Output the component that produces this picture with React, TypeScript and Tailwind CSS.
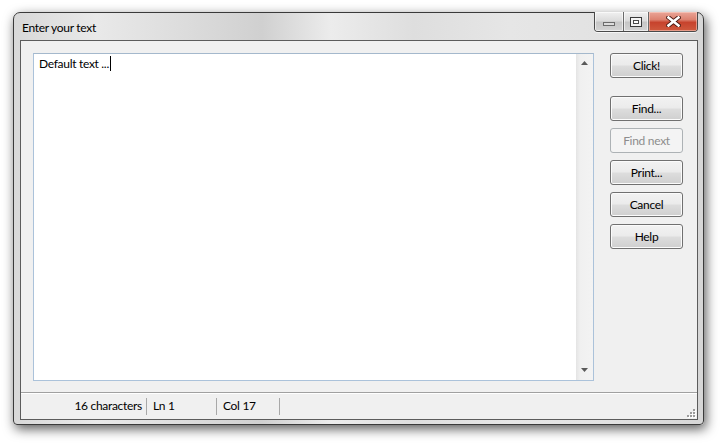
function CaptionButtons() {
  return (
    <div className="flex h-[20px] mt-[-1px] rounded-b-[4px] border border-t-0 border-[#4a4a4a] shadow-[0_1px_0_rgba(255,255,255,0.7)] overflow-hidden">
      <div className="w-[29px] h-full bg-[linear-gradient(#f0f0f0_0%,#dcdcdc_45%,#c6c6c6_55%,#d4d4d4_100%)] shadow-[inset_0_0_0_1px_rgba(255,255,255,0.6)] border-r border-[#6a6a6a] flex items-end justify-center pb-[5px]">
        <div className="w-[12px] h-[4px] border border-[#6b6b6b] bg-[#dcdcdc]" />
      </div>
      <div className="w-[25px] h-full bg-[linear-gradient(#f0f0f0_0%,#dcdcdc_45%,#c6c6c6_55%,#d4d4d4_100%)] shadow-[inset_0_0_0_1px_rgba(255,255,255,0.6)] border-r border-[#6a6a6a] flex items-center justify-center">
        <div className="w-[12px] h-[10px] border border-[#3a3a3a] bg-[#f4f4f4] flex items-center justify-center">
          <div className="w-[6px] h-[4px] border border-[#4a4a4a] bg-white" />
        </div>
      </div>
      <div className="w-[48px] h-full bg-[linear-gradient(#eaa597_0%,#dd8270_40%,#c7432d_55%,#cf5a3e_100%)] shadow-[inset_0_0_0_1px_rgba(255,220,210,0.5)] flex items-center justify-center">
        <svg width="15" height="11" viewBox="0 0 15 11">
          <path d="M2.5 1.5 L12.5 9.5 M12.5 1.5 L2.5 9.5" stroke="#4a1a12" strokeWidth="4.4" strokeLinecap="square" />
          <path d="M2.5 1.5 L12.5 9.5 M12.5 1.5 L2.5 9.5" stroke="#ffffff" strokeWidth="2.6" strokeLinecap="square" />
        </svg>
      </div>
    </div>
  );
}

function Button({ label, disabled }: { label: string; disabled?: boolean }) {
  if (disabled) {
    return (
      <div className="w-[73px] h-[25px] rounded-[3px] border border-[#adb2b5] bg-[#f4f4f4] text-[12px] text-[#8d8d8d] flex items-center justify-center">
        {label}
      </div>
    );
  }
  return (
    <div className="w-[73px] h-[25px] rounded-[3px] border border-[#707070] bg-[linear-gradient(#f2f2f2_0%,#ebebeb_48%,#dddddd_52%,#cfcfcf_100%)] shadow-[inset_0_0_0_1px_#fbfbfb] text-[12px] text-black flex items-center justify-center">
      {label}
    </div>
  );
}

function Arrow({ down }: { down?: boolean }) {
  return (
    <svg width="7" height="4" viewBox="0 0 7 4">
      <path d={down ? "M0 0 L7 0 L3.5 4 Z" : "M3.5 0 L7 4 L0 4 Z"} fill="#5a5a5a" />
    </svg>
  );
}

function Grip() {
  const dots = [
    [9, 0],
    [6, 3],
    [9, 3],
    [3, 6],
    [6, 6],
    [9, 6],
  ];
  return (
    <svg width="12" height="9" viewBox="0 0 12 9">
      {dots.map(([x, y]) => (
        <g key={`${x}-${y}`}>
          <rect x={x + 1} y={y + 1} width="2" height="2" fill="#ffffff" />
          <rect x={x} y={y} width="2" height="2" fill="#9c9c9c" />
        </g>
      ))}
    </svg>
  );
}

export default function App() {
  return (
    <div className="w-[721px] h-[444px] bg-white pl-[13px] pt-[12px] font-[family-name:Lato,'Liberation_Sans',sans-serif] text-[12px] leading-[16px] tracking-[-0.3px] text-black">
      <div className="w-[691px] h-[413px] rounded-t-[7px] rounded-b-[4px] border border-[#3a3a3a] shadow-[2px_4px_12px_rgba(0,0,0,0.65)] bg-[linear-gradient(90deg,#d8d8d8_0%,#e9e9e9_12%,#dcdcdc_25%,#d0d0d0_36%,#ececec_46%,#dedede_58%,#e6e6e6_72%,#e2e2e2_86%,#d6d6d6_100%)] flex flex-col">
        <div className="h-[27px] flex items-start">
          <span className="pl-[8px] pt-[7px]">Enter your text</span>
          <div className="ml-auto mr-[5px]">
            <CaptionButtons />
          </div>
        </div>

        <div className="flex-1 pl-[6px] pr-[5px] pb-[4px] flex">
          <div className="flex-1 border border-[#5c5c5c] bg-[#f0f0f0] flex flex-col">
            <div className="h-[351px] flex pl-[12px] pt-[12px]">
              <div className="w-[561px] h-[328px] border border-[#abc2da] border-t-[#a4b8cc] bg-white flex">
                <div className="flex-1 pl-[5px] pt-[2px] flex items-start">
                  <span>Default text ...</span>
                  <span className="w-[1px] h-[15px] bg-black ml-[1px]" />
                </div>
                <div className="w-[17px] h-full bg-[linear-gradient(90deg,#e4e4e4_0%,#f0f0f0_25%,#f3f3f3_100%)] flex flex-col items-center justify-between pt-[7px] pb-[8px]">
                  <Arrow />
                  <Arrow down />
                </div>
              </div>

              <div className="ml-[16px] flex flex-col">
                <Button label="Click!" />
                <div className="h-[18px]" />
                <div className="flex flex-col gap-[7px]">
                  <Button label="Find..." />
                  <Button label="Find next" disabled />
                  <Button label="Print..." />
                  <Button label="Cancel" />
                  <Button label="Help" />
                </div>
              </div>
            </div>

            <div className="flex-1 border-t border-[#a0a0a0] shadow-[inset_0_1px_0_#ffffff] flex items-center relative">
              <div className="w-[126px] h-[17px] border-r border-[#a8a8a8] flex items-center justify-end pr-[4px]">
                16 characters
              </div>
              <div className="w-[70px] h-[17px] border-r border-[#a8a8a8] flex items-center pl-[6px]">
                Ln 1
              </div>
              <div className="w-[63px] h-[17px] border-r border-[#a8a8a8] flex items-center pl-[6px]">
                Col 17
              </div>
              <div className="absolute right-[1px] bottom-[1px]">
                <Grip />
              </div>
            </div>
          </div>
        </div>
      </div>
    </div>
  );
}
